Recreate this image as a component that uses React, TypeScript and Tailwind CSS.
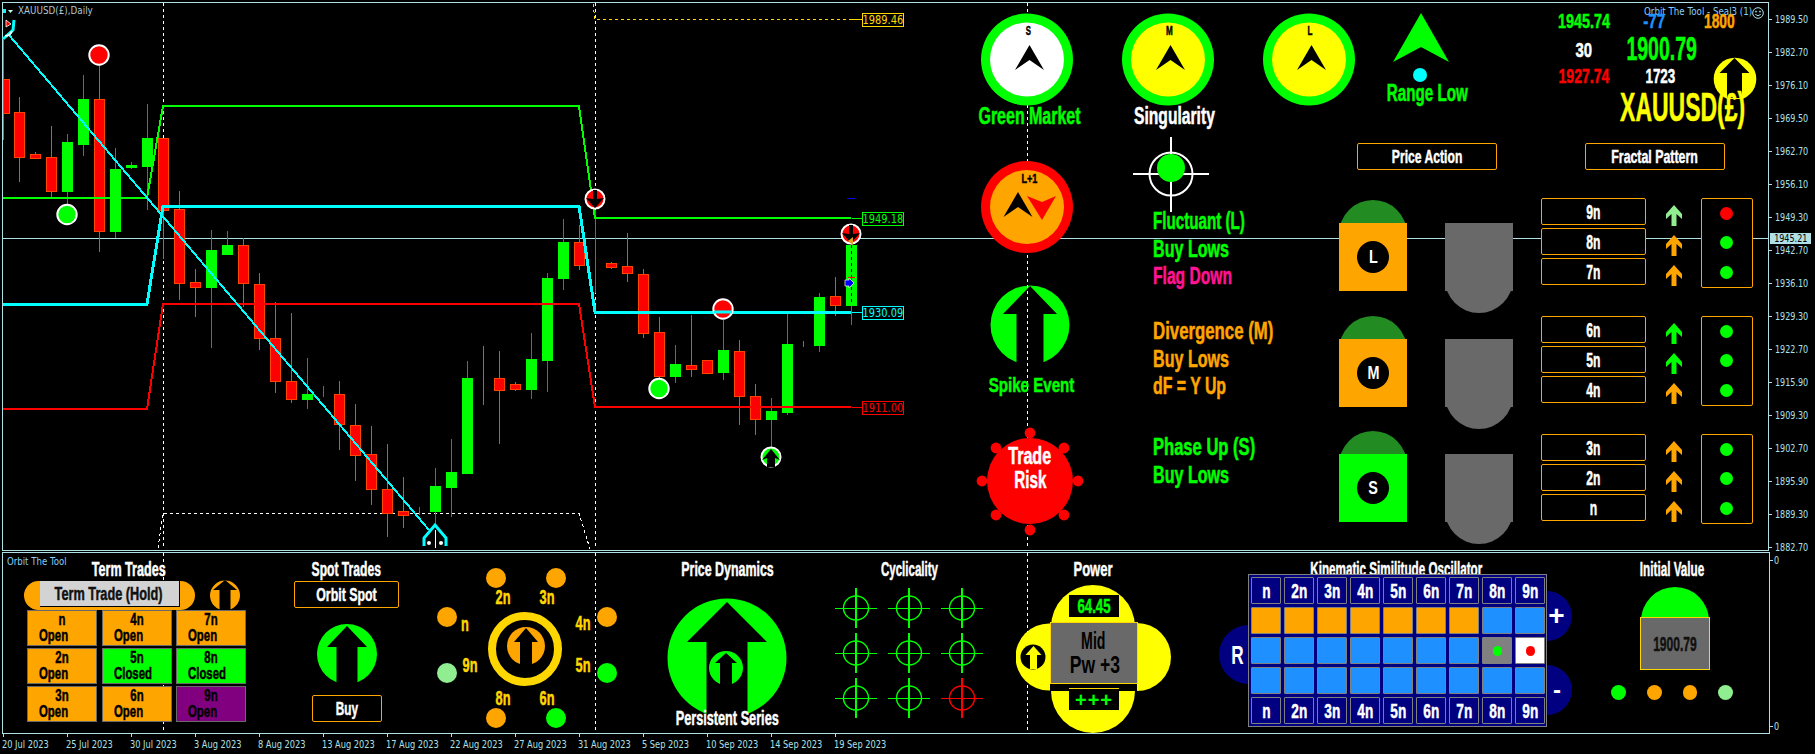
import React from "react";

type C = [number, number, number, number, "r" | "g"];
const candles: C[] = [
  [79,113,40,140,"r"],[112,157,97,182,"r"],[154,158,152,159,"r"],[157,191,126,197,"r"],[142,191,134,207,"g"],[99,144,75,156,"g"],[99,231,63,252,"r"],[169,231,148,238,"g"],[165,167,162,169,"g"],[138,166,104,210,"g"],
  [138,210,138,259,"r"],[209,283,191,300,"r"],[282,287,269,317,"r"],[250,287,230,348,"g"],[245,254,231,255,"g"],[245,283,238,307,"r"],[284,338,273,350,"r"],[338,381,302,393,"r"],[381,399,313,403,"r"],[394,399,358,409,"g"],
  [394,394,386,397,"g"],[394,424,381,450,"r"],[425,455,404,481,"r"],[454,489,426,505,"r"],[489,513,444,537,"r"],[511,515,477,528,"r"],[511,511,507,515,"g"],[486,511,468,527,"g"],[472,487,439,517,"g"],[378,473,361,474,"g"],
  [378,378,346,405,"r"],[378,390,351,444,"r"],[384,389,382,391,"r"],[359,389,333,399,"g"],[278,360,273,392,"g"],[242,278,219,290,"g"],[242,265,225,270,"r"],[264,264,210,293,"g"],[263,267,262,269,"r"],[266,273,233,282,"r"],
  [274,333,269,338,"r"],[332,376,317,378,"r"],[364,376,345,383,"g"],[365,369,315,377,"r"],[360,373,360,374,"r"],[350,372,320,380,"g"],[351,396,340,425,"r"],[396,419,384,435,"r"],[411,419,398,447,"g"],[344,412,313,415,"g"],
  [344,344,341,347,"r"],[297,345,293,352,"g"],[296,305,277,316,"r"],[245,305,243,325,"g"],
];

const axisLabels = ["1989.50","1982.70","1976.10","1969.50","1962.70","1956.10","1949.30","1942.70","1936.10","1929.30","1922.70","1915.90","1909.30","1902.70","1895.90","1889.30","1882.70"];
const dates = ["20 Jul 2023","25 Jul 2023","30 Jul 2023","3 Aug 2023","8 Aug 2023","13 Aug 2023","17 Aug 2023","22 Aug 2023","27 Aug 2023","31 Aug 2023","5 Sep 2023","10 Sep 2023","14 Sep 2023","19 Sep 2023"];

const GREEN = "#00ff00", ORANGE = "#ffa500", GOLD = "#ffd700", LG = "#90ee90", CYAN = "#00ffff", RED = "#ff0000", YEL = "#ffff00", DIM = "#696969";

function arrow(cx: number, ty: number, w: number, wy: number, s: number, by: number) {
  return `${cx},${ty} ${cx + w},${wy} ${cx + s},${wy} ${cx + s},${by} ${cx - s},${by} ${cx - s},${wy} ${cx - w},${wy}`;
}
function Nav({ x, y }: { x: number; y: number }) {
  return <polygon points={`${x},${y} ${x + 14.5},${y + 25} ${x},${y + 15} ${x - 14.5},${y + 25}`} fill="#000" />;
}
function DownMark({ x, y }: { x: number; y: number }) {
  return (
    <g>
      <circle cx={x} cy={y} r={9.5} fill={RED} stroke="#fff" strokeWidth={2} />
      <polygon points={`${x - 2},${y - 9} ${x + 2},${y - 9} ${x + 2},${y} ${x + 9},${y - 1} ${x},${y + 9} ${x - 9},${y - 1} ${x - 2},${y}`} fill="#000" />
    </g>
  );
}

function ChartSvg() {
  return (
    <svg className="absolute -left-[3px] -top-[3px]" width={1769} height={549} viewBox="0 0 1769 549">
      <g shapeRendering="crispEdges">
        <line x1={3} x2={1769} y1={238.5} y2={238.5} stroke="#b0e0e6" />
        {[163.5, 595.5, 1027.5].map((x) => (
          <line key={x} x1={x} x2={x} y1={3} y2={549} stroke="#fff" strokeDasharray="3 3" />
        ))}
        <polyline points="158,548 162,520 163,513.5 579,513.5 586,536 590,549" fill="none" stroke="#fff" strokeDasharray="3 3" />
        <polyline points="593,4 595,19.5 862,19.5" fill="none" stroke={GOLD} strokeDasharray="3 3" />
        <line x1={852} x2={862} y1={19.5} y2={19.5} stroke={GOLD} />
        <line x1={852} x2={862} y1={218.5} y2={218.5} stroke={GREEN} />
        <line x1={852} x2={862} y1={312.5} y2={312.5} stroke={CYAN} />
        <line x1={852} x2={862} y1={407.5} y2={407.5} stroke={RED} />
        {candles.map(([t, b, wt, wb, k], i) => {
          const c = 3 + 16 * i;
          const edge = k === "r" ? "#ff4500" : "#2e8b57";
          const fill = k === "r" ? RED : GREEN;
          return (
            <g key={i}>
              <rect x={c} y={wt} width={1} height={wb - wt} fill={edge} />
              <rect x={Math.max(c - 4.5, 3)} y={t + 0.5} width={c - 4.5 < 3 ? 6.5 : 10} height={b - t} fill={fill} stroke={t === b ? edge : k === "r" ? "#ff4500" : GREEN} />
            </g>
          );
        })}
        <line x1={851.5} x2={851.5} y1={245} y2={305} stroke="#000" strokeDasharray="3 3" />
        <polyline points="3,198 147,198 163,106 579,106 595,218 851,218" fill="none" stroke={GREEN} strokeWidth={2} />
        <polyline points="3,409 147,409 163,304 579,304 595,407 851,407" fill="none" stroke={RED} strokeWidth={2} />
        <polyline points="9,35 429,530" fill="none" stroke={CYAN} strokeWidth={2} />
        <polyline points="3,304 147,304 163,206 579,206 595,312 851,312" fill="none" stroke={CYAN} strokeWidth={3} />
        <rect x={847} y={198} width={8} height={1} fill="#0000ff" />
        <rect x={851} y={277} width={1} height={7} fill={RED} />
        <rect x={848} y={277} width={7} height={1} fill={RED} />
      </g>
      <circle cx={99} cy={55} r={9.7} fill={RED} stroke="#fff" strokeWidth={2} />
      <circle cx={67} cy={214.5} r={9.7} fill={GREEN} stroke="#fff" strokeWidth={2} />
      <circle cx={723} cy={309} r={9.7} fill={RED} stroke="#fff" strokeWidth={2} />
      <line x1={714} x2={732} y1={312} y2={312} stroke={CYAN} strokeWidth={3} />
      <circle cx={659} cy={388.5} r={9.7} fill={GREEN} stroke="#fff" strokeWidth={2} />
      <circle cx={771} cy={457} r={9.5} fill={GREEN} stroke="#fff" strokeWidth={2} />
      <polygon points="771,449 780,460 775,458 775,467 767,467 767,458 762,460" fill="#000" />
      <DownMark x={595} y={199} />
      <DownMark x={851} y={234} />
      <polygon points="853,237 853,245 848,241" fill="#daa520" />
      <polygon points="845,280 849,280 849,278 854,283 849,288 849,286 845,286" fill="#0000ff" stroke="#fff" strokeWidth={0.7} />
      <polyline points="424,546 424,538 435,525 446,538 446,546" fill="none" stroke={CYAN} strokeWidth={3} />
      <rect x={435} y={530} width={1} height={18} fill="#fff" />
      <circle cx={429} cy={543} r={2} fill="#fff" />
      <circle cx={441} cy={543} r={2} fill="#fff" />
      <polyline points="3,39 13,30 14,20" fill="none" stroke={CYAN} strokeWidth={3} />
      <path d="M5 36 Q10 36 12 31" fill="none" stroke="#fff" strokeWidth={2} />
      <polygon points="6,20 11,24 6,27" fill={RED} stroke="#fff" strokeWidth={0.8} />
      <rect x={3} y={9} width={3} height={4} fill={CYAN} />
      <polygon points="8,10 13,10 10.5,13" fill="#cfe" />
    </svg>
  );
}

const SM = "font-['DejaVu_Sans',sans-serif] font-normal whitespace-nowrap";
const HEAVY = "[-webkit-text-stroke:0.5px_currentColor]";

function Lab({ box, text, children }: { box: string; text: string; children: React.ReactNode }) {
  return (
    <div className={`flex justify-center whitespace-nowrap font-bold leading-none ${HEAVY} ${box}`}>
      <span className={text}>{children}</span>
    </div>
  );
}
function Line({ className, children }: { className: string; children: React.ReactNode }) {
  return <div className={`origin-left whitespace-nowrap font-bold text-[23px] leading-[27.5px] ${HEAVY} ${className}`}>{children}</div>;
}
function Pin({ className, children }: { className: string; children: React.ReactNode }) {
  return (
    <div className={`absolute left-[859px] w-[42px] h-[14px] border bg-black flex items-center justify-center leading-none text-[12px] ${SM} ${className}`}>
      <span className="scale-x-[0.82]">{children}</span>
    </div>
  );
}
function Btn({ box, text, children }: { box: string; text: string; children: React.ReactNode }) {
  return (
    <div className={`h-[27px] border border-[#ffa500] rounded-[2px] bg-black flex items-center justify-center text-white font-bold text-[19px] leading-none whitespace-nowrap ${HEAVY} ${box}`}>
      <span className={text}>{children}</span>
    </div>
  );
}

function Gauge({ fill, letter, scale }: { fill: string; letter: string; scale: string }) {
  return (
    <div className="relative w-[94px] h-[93px]">
      <svg width={94} height={93} viewBox="0 0 94 93">
        <circle cx={47} cy={46.5} r={46} fill={GREEN} />
        <circle cx={47} cy={46.5} r={37} fill={fill} />
        <Nav x={49.5} y={32} />
      </svg>
      <Lab box="absolute inset-x-0 top-[11px] text-[13px] text-black pl-[2px]" text={scale}>{letter}</Lab>
    </div>
  );
}

function Block({ letter, bg, text }: { letter: string; bg: string; text: string }) {
  return (
    <div className="flex gap-[38px]">
      <div className="w-[68px] flex flex-col">
        <svg width={68} height={23} viewBox="0 0 68 23"><circle cx={34} cy={34} r={34} fill="#228b22" /></svg>
        <div className={`h-[68px] flex items-center justify-center ${bg}`}>
          <div className="w-[32px] h-[32px] rounded-full bg-black flex items-center justify-center text-white font-bold text-[18px] leading-none">
            <span className={text}>{letter}</span>
          </div>
        </div>
      </div>
      <div className="w-[68px] pt-[23px] flex flex-col">
        <div className="h-[68px] bg-[#696969]" />
        <svg width={68} height={22} viewBox="0 0 68 22"><circle cx={34} cy={-12} r={34} fill={DIM} /></svg>
      </div>
    </div>
  );
}

function SmallArrow({ c }: { c: string }) {
  return (
    <svg width={16} height={21} viewBox="-8 0 16 21">
      <polygon points="0,0 8,9 8,14 2.5,9 2.5,21 -2.5,21 -2.5,9 -8,14 -8,9" fill={c} />
    </svg>
  );
}

function FractalRow({ labels, arrows, dots }: { labels: string[]; arrows: string[]; dots: string[] }) {
  return (
    <div className="flex items-start">
      <div className="w-[105px] flex flex-col gap-[3px]">
        {labels.map((t) => (
          <div key={t} className={`h-[27px] border border-[#ffa500] rounded-[2px] bg-black flex items-center justify-center text-white font-bold text-[21px] leading-none ${HEAVY}`}>
            <span className="scale-x-[0.58]">{t}</span>
          </div>
        ))}
      </div>
      <div className="ml-[20px] pt-[7px] flex flex-col gap-[9px]">
        {arrows.map((c, i) => <SmallArrow key={i} c={c} />)}
      </div>
      <div className="ml-[19px] w-[52px] h-[90px] border border-[#ffa500] rounded-[2px] bg-black flex flex-col items-center justify-around pr-[2px]">
        {dots.map((c, i) => <span key={i} className={`block w-[13px] h-[13px] rounded-full ${c}`} />)}
      </div>
    </div>
  );
}

function Dashboard() {
  return (
    <div className="relative w-[794px] h-full ml-[971px] flex flex-col">
      {/* first row */}
      <div className="flex h-[127px] pt-[10px]">
        <div className="w-[106px] flex flex-col items-center">
          <Gauge fill="#ffffff" letter="S" scale="scale-x-[0.6]" />
          <Lab box="w-[102px] -mt-[1px] text-[23px] text-[#00ff00] ml-[4px]" text="scale-x-[0.694]">Green Market</Lab>
        </div>
        <div className="ml-[41px] w-[94px] flex flex-col">
          <Gauge fill="#ffff00" letter="M" scale="scale-x-[0.62]" />
          <Lab box="w-[81px] -mt-[1px] ml-[13px] text-[23px] text-white" text="scale-x-[0.68]">Singularity</Lab>
        </div>
        <div className="ml-[47px] w-[94px]">
          <Gauge fill="#ffff00" letter="L" scale="scale-x-[0.62]" />
        </div>
        <div className="ml-[31px] w-[81px] flex flex-col">
          <svg className="ml-[6px]" width={58} height={70} viewBox="0 0 58 70">
            <polygon points="28,0 56,49 28,34 0,49" fill={GREEN} />
            <circle cx={27} cy={62} r={7} fill={CYAN} />
          </svg>
          <Lab box="-mt-[1px] text-[23px] text-[#00ff00]" text="scale-x-[0.66]">Range Low</Lab>
        </div>
        {/* read-outs */}
        <div className="relative ml-[90px] w-[212px] -mt-[10px]">
          <div className={`absolute left-[86px] top-[3px] text-[11px] leading-[12px] text-[#87cefa] origin-left scale-x-[0.79] ${SM}`}>Orbit The Tool - Seal3 (1)</div>
          <svg className="absolute left-[194px] top-[4px]" width="12" height="12" viewBox="0 0 12 12" fill="none" stroke="#b0e0e6">
            <circle cx="6" cy="6" r="5.3" /><circle cx="4" cy="4.6" r="0.6" /><circle cx="8" cy="4.6" r="0.6" /><path d="M3.3 7.4 Q6 10 8.7 7.4" />
          </svg>
          <svg className="absolute left-[155px] top-[54px]" width={44} height={42} viewBox="0 0 44 42">
            <circle cx={22} cy={22} r={21.3} fill={YEL} />
            <polygon points={arrow(21.5, 1, 15, 16, 7.5, 41)} fill="#000" />
          </svg>
          <div className="flex h-[84px]">
            <div className="w-[52px] flex flex-col text-[21px]">
              <Lab box="mt-[7px] text-[#00ff00]" text="scale-x-[0.685]">1945.74</Lab>
              <Lab box="mt-[8px] text-white" text="scale-x-[0.71]">30</Lab>
              <Lab box="mt-[5px] text-[#ff0000]" text="scale-x-[0.67]">1927.74</Lab>
            </div>
            <div className="ml-[14px] w-[72px] flex flex-col text-[21px]">
              <Lab box="mt-[7px] pr-[12px] text-[#1e90ff]" text="scale-x-[0.72]">-77</Lab>
              <Lab box="mt-[1px] ml-[3px] text-[33px] text-[#00ff00]" text="scale-x-[0.59]">1900.79</Lab>
              <Lab box="mt-0 text-white" text="scale-x-[0.64]">1723</Lab>
            </div>
            <div className="ml-[8px] w-[31px] text-[21px]">
              <Lab box="mt-[7px] text-[#ffa500]" text="scale-x-[0.66]">1800</Lab>
            </div>
          </div>
          <Lab box="relative ml-[62px] w-[125px] text-[41px] text-[#ffff00]" text="scale-x-[0.56]">XAUUSD(£)</Lab>
        </div>
      </div>

      {/* second row */}
      <div className="flex flex-1">
        <div className="w-[112px] flex flex-col items-center">
          <div className="relative mt-[30px] mr-[6px] w-[94px] h-[94px]">
            <svg width={94} height={94} viewBox="0 0 94 94">
              <circle cx={47} cy={47} r={46} fill={RED} />
              <circle cx={47} cy={47} r={37} fill={ORANGE} />
              <Nav x={38} y={32} />
              <polygon points="47,36 62,42 76,36 62,60" fill={RED} />
            </svg>
            <Lab box="absolute inset-x-0 top-[12px] pl-[4px] text-[13px] text-black" text="scale-x-[0.7]">L+1</Lab>
          </div>
          <svg className="mt-[31px]" width={80} height={85} viewBox="0 0 80 85">
            <circle cx={40} cy={40} r={39.5} fill={GREEN} />
            <polygon points={arrow(40, 1, 27, 29, 13.5, 85)} fill="#000" />
            <line x1={37.5} x2={37.5} y1={0} y2={85} stroke="#fff" strokeDasharray="3 3" shapeRendering="crispEdges" />
          </svg>
          <Lab box="w-[86px] mt-[4px] ml-[4px] text-[21px] text-[#00ff00]" text="scale-x-[0.72]">Spike Event</Lab>
          <div className="relative mt-[32px] w-[108px] h-[110px]">
            <svg width={108} height={110} viewBox="0 0 108 110">
              <circle cx={54} cy={54} r={43} fill={RED} />
              {[[54,6],[54,103],[6,54],[102,54],[20,21],[88,21],[20,88],[88,88]].map(([x, y]) => (
                <circle key={`${x}-${y}`} cx={x} cy={y} r={5.4} fill={RED} />
              ))}
            </svg>
            <div className="absolute inset-0 pt-[18px] flex flex-col text-[23px] text-white">
              <Lab box="h-[24px]" text="scale-x-[0.7]">Trade</Lab>
              <Lab box="" text="scale-x-[0.66]">Risk</Lab>
            </div>
          </div>
        </div>

        <div className="ml-[47px] w-[206px] flex flex-col">
          <svg className="mt-[7px]" width={76} height={76} viewBox="0 0 76 76">
            <g stroke="#fff" fill="none" strokeWidth={2}>
              <circle cx={38} cy={37} r={21.5} />
              <line x1={0} x2={76} y1={37} y2={37} />
              <line x1={38} x2={38} y1={0} y2={75} />
            </g>
            <circle cx={38} cy={31} r={14} fill={GREEN} />
          </svg>
          <div className="ml-[20px] -mt-[5px]">
            <Line className="text-[#00ff00] scale-x-[0.66]">Fluctuant (L)</Line>
            <Line className="text-[#00ff00] scale-x-[0.7]">Buy Lows</Line>
            <Line className="text-[#ff1493] scale-x-[0.68]">Flag Down</Line>
            <Line className="mt-[27.5px] text-[#ffa500] scale-x-[0.73]">Divergence (M)</Line>
            <Line className="text-[#ffa500] scale-x-[0.7]">Buy Lows</Line>
            <Line className="text-[#ffa500] scale-x-[0.69]">dF = Y Up</Line>
            <Line className="mt-[33.5px] text-[#00ff00] scale-x-[0.72]">Phase Up (S)</Line>
            <Line className="text-[#00ff00] scale-x-[0.7]">Buy Lows</Line>
          </div>
        </div>

        <div className="w-[174px] flex flex-col">
          <Btn box="mt-[13px] ml-[18px] w-[140px]" text="scale-x-[0.64]">Price Action</Btn>
          <div className="mt-[30px] flex flex-col gap-[3px]">
            <Block letter="L" bg="bg-[#ffa500]" text="scale-x-[0.8]" />
            <Block letter="M" bg="bg-[#ffa500]" text="scale-x-[0.8]" />
            <div className="-mt-px"><Block letter="S" bg="bg-[#00ff00]" text="scale-x-[0.8]" /></div>
          </div>
        </div>

        <div className="ml-[28px] w-[212px] flex flex-col">
          <Btn box="mt-[13px] ml-[44px] w-[140px]" text="scale-x-[0.65]">Fractal Pattern</Btn>
          <div className="mt-[28px] flex flex-col gap-[28px]">
            <FractalRow labels={["9n", "8n", "7n"]} arrows={[LG, ORANGE, ORANGE]} dots={["bg-[#ff0000]", "bg-[#00ff00]", "bg-[#00ff00]"]} />
            <FractalRow labels={["6n", "5n", "4n"]} arrows={[GREEN, GREEN, ORANGE]} dots={["bg-[#00ff00]", "bg-[#00ff00]", "bg-[#00ff00]"]} />
            <FractalRow labels={["3n", "2n", "n"]} arrows={[ORANGE, ORANGE, ORANGE]} dots={["bg-[#00ff00]", "bg-[#00ff00]", "bg-[#00ff00]"]} />
          </div>
        </div>
      </div>
    </div>
  );
}

const trade = [
  ["n", "Open", "bg-[#ffa500]"], ["4n", "Open", "bg-[#ffa500]"], ["7n", "Open", "bg-[#ffa500]"],
  ["2n", "Open", "bg-[#ffa500]"], ["5n", "Closed", "bg-[#00ff00]"], ["8n", "Closed", "bg-[#00ff00]"],
  ["3n", "Open", "bg-[#ffa500]"], ["6n", "Open", "bg-[#ffa500]"], ["9n", "Open", "bg-[#800080]"],
];
const ns = ["n", "2n", "3n", "4n", "5n", "6n", "7n", "8n", "9n"];
const orbit: [string, string][] = [
  ["2n", "left-[66px] top-[34px]"], ["3n", "left-[110px] top-[34px]"], ["n", "left-[28px] top-[61px]"], ["4n", "left-[146px] top-[60px]"],
  ["9n", "left-[33px] top-[102px]"], ["5n", "left-[146px] top-[102px]"], ["8n", "left-[66px] top-[135px]"], ["6n", "left-[110px] top-[135px]"],
];

function KCell({ bg, children }: { bg: string; children?: React.ReactNode }) {
  return <div className={`h-[27px] border border-[#808080] rounded-[1px] flex items-center justify-center ${bg}`}>{children}</div>;
}
function KHead({ t }: { t: string }) {
  return <KCell bg="bg-[#000080]"><span className={`text-white font-bold text-[21px] leading-none scale-x-[0.65] ${HEAVY}`}>{t}</span></KCell>;
}
function Head({ box, text, children }: { box: string; text: string; children: React.ReactNode }) {
  return <Lab box={`h-[20px] text-[20px] text-white ${box}`} text={text}>{children}</Lab>;
}

function SubWindow() {
  return (
    <div className="relative flex pl-[21px] pt-[6px] h-full">
      {/* term trades */}
      <div className="w-[222px] flex flex-col">
        <Head box="ml-[67px] w-[76px]" text="scale-x-[0.63]">Term Trades</Head>
        <div className="mt-[2px] flex items-start h-[29px]">
          <div className="w-[171px] h-[29px] rounded-full bg-[#ffa500] flex justify-center">
            <div className={`w-[140px] h-[26px] bg-[#d3d3d3] border-r border-b border-black flex items-center justify-center text-[#111] font-bold text-[19px] leading-none whitespace-nowrap ${HEAVY}`}>
              <span className="scale-x-[0.67]">Term Trade (Hold)</span>
            </div>
          </div>
          <svg className="ml-[15px] -mt-px" width={30} height={31} viewBox="0 0 30 31">
            <circle cx={15} cy={15.5} r={15} fill={ORANGE} />
            <polygon points={arrow(15, 0, 12, 10, 5.5, 30)} fill="#000" />
          </svg>
        </div>
        <div className="ml-[3px] grid grid-cols-[repeat(3,70px)] gap-x-[4.5px] gap-y-[2px]">
          {trade.map(([a, b, bg]) => (
            <div key={a} className={`h-[36px] border border-[#696969] pt-[1px] ${bg} flex flex-col text-black font-bold text-[17px] leading-[16px] whitespace-nowrap ${HEAVY}`}>
              <span className="text-center scale-x-[0.67]">{a}</span>
              <span className="ml-[11px] origin-left scale-x-[0.67]">{b}</span>
            </div>
          ))}
        </div>
      </div>

      {/* spot trades */}
      <div className="ml-[48px] w-[105px] flex flex-col items-center">
        <Head box="" text="scale-x-[0.605]">Spot Trades</Head>
        <Btn box="mt-[2px] w-[105px]" text="scale-x-[0.65]">Orbit Spot</Btn>
        <svg className="mt-[16px]" width={60} height={62} viewBox="0 0 60 62">
          <circle cx={30} cy={30} r={30} fill={GREEN} />
          <polygon points={arrow(30, 2, 20, 23, 10.5, 61)} fill="#000" />
        </svg>
        <Btn box="mt-[9px] w-[70px]" text="scale-x-[0.62]">Buy</Btn>
      </div>

      {/* orbit */}
      <div className="relative ml-[38px] -mt-[6px] w-[180px] h-[180px]">
        <svg width={180} height={180} viewBox="437 553 180 180">
          {[[496,578,ORANGE],[556,578,ORANGE],[447,617,ORANGE],[607,617,ORANGE],[447,673,LG],[607,673,GREEN],[496,718,ORANGE],[556,718,GREEN]].map(([x, y, c]) => (
            <circle key={`${x}-${y}`} cx={x as number} cy={y as number} r={10} fill={c as string} />
          ))}
          <circle cx={525} cy={649} r={33} fill="none" stroke={GOLD} strokeWidth={8} />
          <circle cx={526} cy={646} r={19} fill={ORANGE} />
          <polygon points={arrow(526, 628, 12, 642, 6, 666)} fill="#000" />
        </svg>
        {orbit.map(([t, pos]) => (
          <span key={t} className={`absolute -translate-x-1/2 font-bold text-[20px] leading-none text-[#ffd700] scale-x-[0.64] ${HEAVY} ${pos}`}>{t}</span>
        ))}
      </div>

      {/* price dynamics */}
      <div className="ml-[50px] w-[120px] flex flex-col items-center">
        <Head box="" text="scale-x-[0.62]">Price Dynamics</Head>
        <svg className="mt-[19px]" width={120} height={120} viewBox="0 0 120 120">
          <circle cx={60} cy={60} r={59.5} fill={GREEN} />
          <polygon points={arrow(60, 4, 40, 44, 20.5, 120)} fill="#000" />
          <circle cx={59} cy={70} r={17} fill={GREEN} />
          <polygon points={arrow(59, 55, 11, 65, 6, 87)} fill="#000" />
        </svg>
        <Lab box="-mt-[11px] relative text-[21px] text-white" text="scale-x-[0.605]">Persistent Series</Lab>
      </div>

      {/* cyclicality */}
      <div className="ml-[48px] w-[148px] flex flex-col items-center">
        <Head box="" text="scale-x-[0.576]">Cyclicality</Head>
        <div className="mt-[9px] grid grid-cols-[repeat(3,42px)] gap-x-[11px] gap-y-[5px]">
          {Array.from({ length: 9 }).map((_, i) => {
            const c = i === 8 ? RED : GREEN;
            return (
              <svg key={i} width={42} height={40} viewBox="0 0 42 40">
                <g stroke={c} fill="none">
                  <ellipse cx={21} cy={20} rx={12.5} ry={12} strokeWidth={1.4} />
                  <line x1={0} x2={42} y1={20} y2={20} strokeWidth={1} shapeRendering="crispEdges" />
                  <line x1={21} x2={21} y1={0} y2={40} strokeWidth={1.6} shapeRendering="crispEdges" />
                </g>
              </svg>
            );
          })}
        </div>
      </div>

      {/* power */}
      <div className="ml-[33px] w-[155px] flex flex-col items-center">
        <Head box="" text="scale-x-[0.65]">Power</Head>
        <div className="relative mt-[6px] w-[155px] h-[148px] flex flex-col items-center pt-[10px] pl-[1px]">
          <svg className="absolute inset-0" width={155} height={148} viewBox="0 0 155 148">
            <circle cx={77} cy={42} r={42} fill={YEL} />
            <circle cx={77} cy={106} r={42} fill={YEL} />
            <circle cx={33} cy={72} r={33.5} fill={YEL} />
            <circle cx={121} cy={72} r={34} fill={YEL} />
            <rect x={34} y={98} width={87} height={8} fill="#000" />
            <circle cx={17} cy={72} r={12.5} fill="#000" />
            <polygon points={arrow(17.5, 61, 8, 70, 3.5, 84)} fill={YEL} />
          </svg>
          <div className={`relative w-[50px] h-[22px] bg-black flex items-center justify-center text-[#00ff00] font-bold text-[20px] leading-none ${HEAVY}`}>
            <span className="scale-x-[0.66]">64.45</span>
          </div>
          <div className="relative mt-[5px] w-[88px] h-[62px] bg-[#696969] border border-[#ffd700] flex flex-col items-center justify-center text-black font-bold text-[24px] leading-[24px] whitespace-nowrap">
            <span className="scale-x-[0.59] pr-[3px]">Mid</span>
            <span className="scale-x-[0.73] pl-[3px]">Pw +3</span>
          </div>
          <div className="relative mt-[4px] w-[50px] h-[22px] bg-black border-t border-[#ffd700] flex items-center justify-center text-[#00ff00] font-bold text-[20px] leading-none tracking-[1px]">+++</div>
        </div>
      </div>

      {/* kinematic similitude oscillator */}
      <div className="relative ml-[48px] w-[354px] flex flex-col">
        <div className="absolute left-0 top-[66px] w-[59px] h-[59px] rounded-full bg-[#000080] flex items-center pl-[9px] text-white font-bold text-[26px] leading-none"><span className="scale-x-[0.66]">R</span></div>
        <div className="absolute left-[303px] top-[32px] w-[50px] h-[50px] rounded-full bg-[#000080] flex items-center justify-center pl-[19px] text-white font-bold text-[28px] leading-none">+</div>
        <div className="absolute left-[303px] top-[106px] w-[50px] h-[50px] rounded-full bg-[#000080] flex items-center justify-center pl-[20px] text-white font-bold text-[24px] leading-none">-</div>
        <Head box="" text="scale-x-[0.584]">Kinematic Similitude Oscillator</Head>
        <div className="relative ml-[29px] -mt-[5px] w-[299px] bg-[#000080] border border-[#808080] p-[2px] grid grid-cols-[repeat(9,30px)] gap-[3px]">
          {ns.map((n) => <KHead key={n} t={n} />)}
          {ns.map((n, i) => <KCell key={n} bg={i < 7 ? "bg-[#ffa500]" : "bg-[#1e90ff]"} />)}
          {ns.map((n, i) => (
            <KCell key={n} bg={i === 7 ? "bg-[#808080]" : i === 8 ? "bg-white" : "bg-[#1e90ff]"}>
              {i === 7 && <span className="w-[9px] h-[10px] rounded-full bg-[#00ff00]" />}
              {i === 8 && <span className="w-[9px] h-[10px] rounded-full bg-[#ff0000]" />}
            </KCell>
          ))}
          {ns.map((n) => <KCell key={n} bg="bg-[#1e90ff]" />)}
          {ns.map((n) => <KHead key={n} t={n} />)}
        </div>
      </div>

      {/* initial value */}
      <div className="ml-[38px] w-[122px] flex flex-col items-center">
        <Head box="" text="scale-x-[0.585]">Initial Value</Head>
        <svg className="mt-[8px] ml-[5px]" width={68} height={30} viewBox="0 0 68 30"><circle cx={34} cy={34} r={34} fill={GREEN} /></svg>
        <div className={`ml-[5px] w-[70px] h-[53px] bg-[#696969] border border-[#ffd700] flex items-center justify-center text-[#111] font-bold text-[21px] leading-none ${HEAVY}`}><span className="scale-x-[0.575]">1900.79</span></div>
        <div className="mt-[15px] flex gap-[21px] w-full">
          <span className="w-[15px] h-[15px] rounded-full bg-[#00ff00]" />
          <span className="w-[15px] h-[15px] rounded-full bg-[#ffa500]" />
          <span className="w-[15px] h-[15px] rounded-full bg-[#ffa500]" />
          <span className="w-[15px] h-[15px] rounded-full bg-[#90ee90]" />
        </div>
      </div>
    </div>
  );
}

export default function App() {
  return (
    <div className="relative w-[1815px] h-[754px] overflow-hidden bg-black text-[#b0e0e6] font-['Liberation_Sans',sans-serif]">
      <div className="flex flex-col pt-[2px] pl-[2px] h-full">
        {/* main window */}
        <div className="flex h-[549px]">
          <div className="relative w-[1768px] h-full border border-[#b0e0e6]">
            <ChartSvg />
            <div className={`absolute left-[15px] top-[2px] text-[11px] leading-[12px] text-[#b0c4cc] origin-left scale-x-[0.8] ${SM}`}>XAUUSD(£),Daily</div>
            <Pin className="top-[10px] border-[#ffd700] text-[#ffd700]">1989.46</Pin>
            <Pin className="top-[209px] border-[#00ff00] text-[#00ff00]">1949.18</Pin>
            <Pin className="top-[303px] border-[#00ffff] text-[#00ffff]">1930.09</Pin>
            <Pin className="top-[398px] border-[#ff0000] text-[#ff0000]">1911.00</Pin>
            <Dashboard />
          </div>
          <div className="relative flex flex-col pt-[1px] text-[11px] leading-none">
            {axisLabels.map((l) => (
              <div key={l} className="h-[33px] shrink-0 flex items-center gap-[3px]">
                <span className="w-[3px] h-px bg-[#b0e0e6]" />
                <span className={`origin-left scale-x-[0.73] ${SM}`}>{l}</span>
              </div>
            ))}
            <div className={`absolute left-[1px] top-[231px] w-[41px] h-[11px] bg-[#b0e0e6] text-black text-[11px] leading-[11px] flex justify-center ${SM}`}><span className="scale-x-[0.73]">1945.21</span></div>
          </div>
        </div>
        {/* indicator window */}
        <div className="flex h-[182px] mt-[1px]">
          <div className="relative w-[1768px] h-full border border-[#b0e0e6]">
            <svg className="absolute -left-[3px] top-0" width={1100} height={180} viewBox="0 0 1100 180" shapeRendering="crispEdges">
              {[163.5, 595.5, 1027.5].map((x) => <line key={x} x1={x} x2={x} y1={0} y2={180} stroke="#fff" strokeDasharray="3 3" />)}
            </svg>
            <div className={`absolute left-[4px] top-[3px] text-[11px] leading-[12px] text-[#87cefa] origin-left scale-x-[0.78] ${SM}`}>Orbit The Tool</div>
            <SubWindow />
          </div>
          <div className="flex flex-col justify-between py-[1px] text-[11px] leading-none">
            <div className="flex items-center gap-[1px] h-[14px]"><span className="w-[3px] h-px bg-[#b0e0e6]" /><span className={`origin-left scale-x-[0.73] ${SM}`}>0</span></div>
            <div className="flex items-center gap-[1px] h-[14px]"><span className="w-[3px] h-px bg-[#b0e0e6]" /><span className={`origin-left scale-x-[0.73] ${SM}`}>0</span></div>
          </div>
        </div>
        {/* date axis */}
        <div className="flex text-[11px] leading-none">
          {dates.map((d) => (
            <div key={d} className="w-[64px] h-[20px] flex flex-col items-start">
              <span className="ml-[1px] w-px h-[3px] bg-[#b0e0e6]" />
              <span className={`mt-[2px] origin-left scale-x-[0.75] ${SM}`}>{d}</span>
            </div>
          ))}
        </div>
      </div>
    </div>
  );
}
